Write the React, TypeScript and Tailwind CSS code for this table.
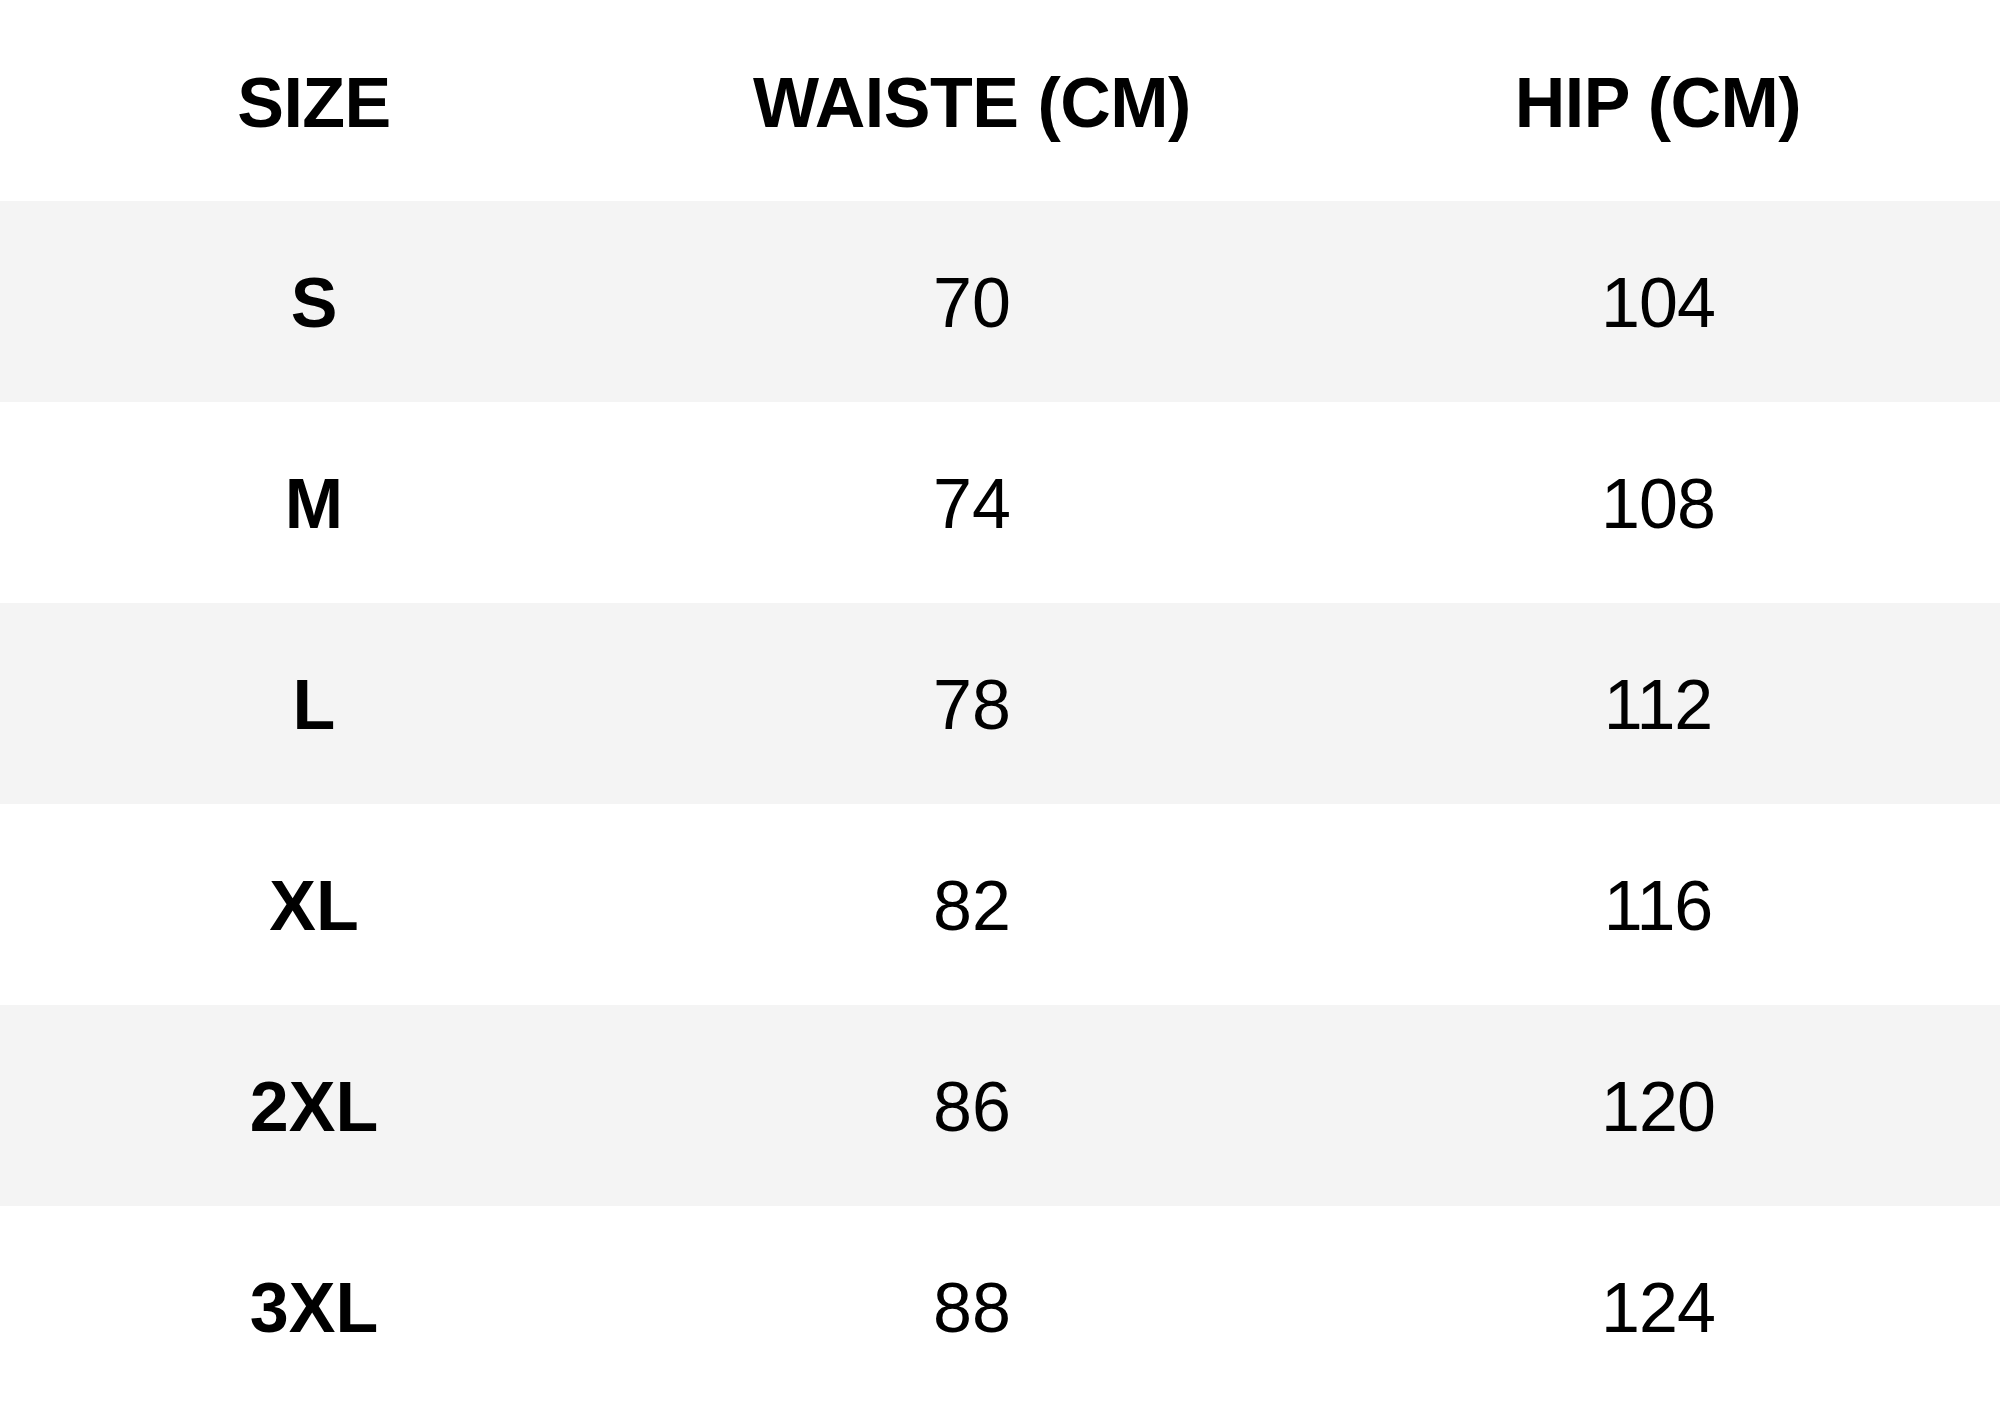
const rows = [
  { size: "S", waist: "70", hip: "104" },
  { size: "M", waist: "74", hip: "108" },
  { size: "L", waist: "78", hip: "112" },
  { size: "XL", waist: "82", hip: "116" },
  { size: "2XL", waist: "86", hip: "120" },
  { size: "3XL", waist: "88", hip: "124" },
];

export default function App() {
  return (
    <div className="w-[2000px] bg-white text-black font-['Liberation_Sans',Arial,sans-serif] text-[70px] leading-none">
      <div className="grid h-[201px] grid-cols-[628px_688px_684px] items-center pt-[4px] font-bold text-center tracking-[-0.5px]">
        <div>SIZE</div>
        <div>WAISTE (CM)</div>
        <div>HIP (CM)</div>
      </div>
      {rows.map((r, i) => (
        <div
          key={r.size}
          className={
            "grid h-[201px] grid-cols-[628px_688px_684px] items-center pt-[3px] text-center " +
            (i % 2 === 0 ? "bg-[#f4f4f4]" : "bg-white")
          }
        >
          <div className="font-bold">{r.size}</div>
          <div>{r.waist}</div>
          <div className="tracking-[-1px]">{r.hip}</div>
        </div>
      ))}
    </div>
  );
}
